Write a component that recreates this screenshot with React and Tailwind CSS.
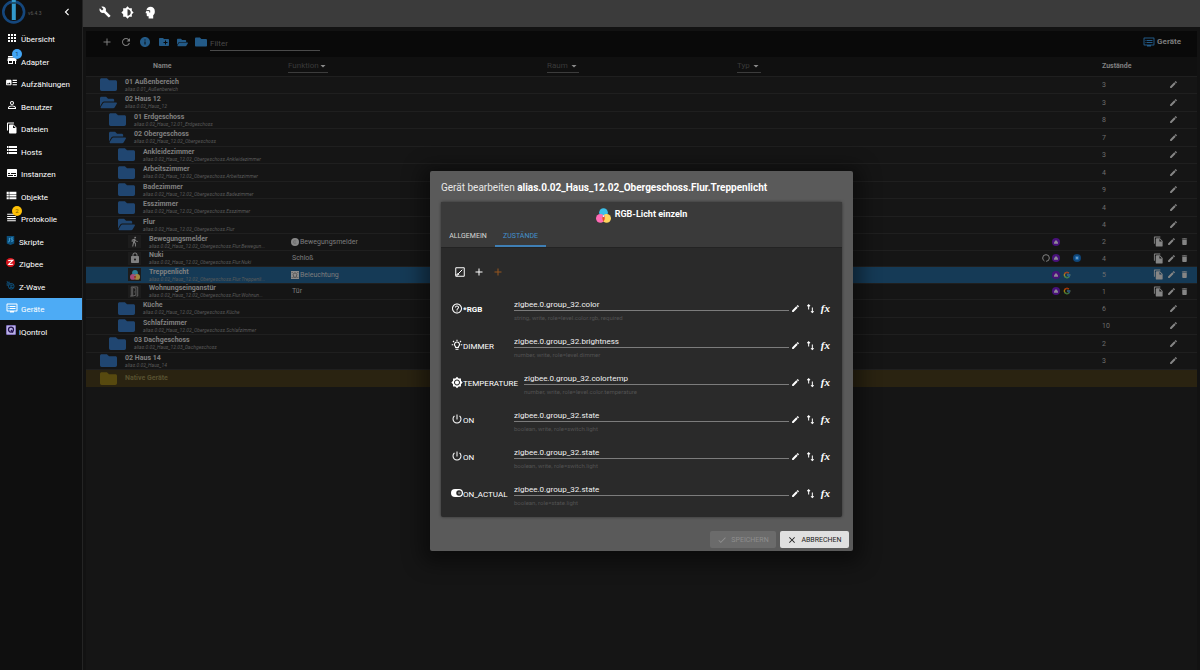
import React, { useState } from "react";
import {
    MdApps, MdStore, MdArtTrack, MdPersonOutline, MdFileCopy, MdStorage, MdSubtitles, MdViewList,
    MdViewHeadline, MdDvr, MdBuild, MdBrightness6, MdAdd, MdRefresh, MdInfo, MdCreateNewFolder,
    MdEdit, MdDelete, MdCheck, MdClose, MdHelpOutline, MdBrightness7,
    MdPowerSettingsNew, MdLock, MdDirectionsWalk, MdArrowDropDown, MdChevronLeft,
} from "react-icons/md";
import { FaFolder, FaFolderOpen } from "react-icons/fa";
import { FcGoogle } from "react-icons/fc";

const LogoIcon = () => (
    <svg viewBox="0 0 24 24" className="size-6 shrink-0">
        <circle cx="11.700" cy="12" r="10.400" fill="none" stroke="#15477d" strokeWidth="2.600" />
        <path d="M9.800 0h4v20h-4z" fill="#3399cc" />
        <path d="M9.800 2.500h4v1h-4z" fill="#0f0f0f" />
    </svg>
);

const HeadIcon = () => (
    <svg viewBox="0 0 24 24" className="size-[13px]" fill="currentColor">
        <path d="M12 1.500C8 1.500 5 4 4.600 8L3 12.500c-.2.600.2 1 .8 1H5V17c0 1.200.8 2 2 2h1.500v4H17v-6c2-1.600 3-3.600 3-7.500 0-5-3.500-8-8-8z" />
        <path d="M4 8.500h6.500v3.500" fill="none" stroke="#3b3b3b" strokeWidth="1.800" />
    </svg>
);

const RgbIcon = ({ className }) => (
    <svg viewBox="0 0 24 24" className={className}>
        <circle cx="12" cy="7.200" r="7" fill="#3dbfe8" />
        <circle cx="7" cy="16.500" r="7" fill="#ff6ab5" />
        <circle cx="17" cy="16.500" r="7" fill="#ffd45c" />
        <path d="M12 11.600a7 7 0 0 1 0 9.800a7 7 0 0 1 0-9.800z" fill="#e8442f" />
        <path d="M9.500 13.600a7 7 0 0 0 5 0L12 11z" fill="#8d62d2" />
        <circle cx="12" cy="13" r="1.300" fill="#fff" />
    </svg>
);

const BulbIcon = () => (
    <svg viewBox="0 0 24 24" className="size-3" fill="none" stroke="currentColor" strokeWidth="2.200">
        <path d="M9.300 17v-1.700a5 5 0 1 1 5.400 0V17zM9 20.500h6" />
        <path d="M12 1.500v2.500M1.500 11.500h3M19.500 11.500h3M4 4l2 2M20 4l-2 2" />
    </svg>
);

const ToggleIcon = () => (
    <svg viewBox="0 0 24 16" className="w-3 h-2 shrink-0">
        <rect width="24" height="16" rx="8" fill="currentColor" />
        <circle cx="16" cy="8" r="5.500" fill="#2a2a2a" />
        <circle cx="16.500" cy="8" r="2.500" fill="#777" />
    </svg>
);

const SwapIcon = () => (
    <svg viewBox="0 0 24 24" className="size-[11px]" fill="none" stroke="currentColor" strokeWidth="2.200">
        <path d="M8 14V4M5 7l3-3 3 3M16 10v11M13 18l3 3 3-3" />
    </svg>
);

const DoorIcon = () => (
    <svg viewBox="0 0 24 24" className="size-[11px]" fill="none" stroke="#6c6c6c" strokeWidth="1.800">
        <path d="M5 22V2h14v20h-3M2.500 22H8M8 22l7-2V5L8 3zM12.500 12v2" />
    </svg>
);

const JsIcon = () => (
    <svg viewBox="0 0 24 24" className="size-[9px]">
        <path d="M2 0h20v20l-10 4-10-4z" fill="#0b4f7c" />
        <path d="M9 5v9c0 2-3 2-4 .500M19 6c-3-2-6-1-5.500 1.500s5 1.500 5.300 4-3 3.500-5.800 1.500" fill="none" stroke="#4fb0e8" strokeWidth="2.200" />
    </svg>
);

const ZigbeeIcon = () => (
    <svg viewBox="0 0 24 24" className="size-[9px]">
        <circle cx="12" cy="12" r="12" fill="#d8141c" />
        <path d="M6 7c4-1.500 7-1 12-1L7 17c4 1 8 0 12-.5" fill="none" stroke="#fff" strokeWidth="3" />
    </svg>
);

const ZwaveIcon = () => (
    <svg viewBox="0 0 24 24" className="size-[9px]" fill="none" stroke="#0e5a8c" strokeWidth="2.400">
        <circle cx="14" cy="14" r="7.500" />
        <path d="M10 11h7l-6 6h7M1 9c2-4 5-6 9-6M3 13c1-4 3-6 7-7M6 3l-4-1" />
    </svg>
);

const IqIcon = () => (
    <svg viewBox="0 0 24 24" className="size-[10px]">
        <rect width="24" height="24" rx="3" fill="#7a68b5" />
        <rect x="2" y="2" width="20" height="20" fill="#b9b2e4" />
        <circle cx="12" cy="11" r="6" fill="none" stroke="#23104f" strokeWidth="3" />
        <path d="M12 12l5 6" stroke="#23104f" strokeWidth="3" />
    </svg>
);

const ShowAllIcon = () => (
    <svg viewBox="0 0 24 24" className="size-3" fill="none" stroke="currentColor" strokeWidth="2">
        <path d="M3.500 3.500h17v17h-17z" />
        <path d="M7.500 16.500l9-9M7 17.300l1-3 2 2zM3 16l4 4" />
    </svg>
);

const AliasIcon = () => (
    <svg viewBox="0 0 24 24" className="size-2">
        <circle cx="12" cy="12" r="12" fill="#48117a" />
        <path d="M6 13l6-7 6 7v4H6z" fill="#8f8a96" />
    </svg>
);

const AlexaIcon = () => (
    <svg viewBox="0 0 24 24" className="size-2">
        <circle cx="12" cy="12" r="10" fill="none" stroke="#808080" strokeWidth="3" strokeDasharray="58 5" strokeDashoffset="-20" />
    </svg>
);

const MaterialIcon = () => (
    <svg viewBox="0 0 24 24" className="size-2">
        <circle cx="12" cy="12" r="12" fill="#0f4577" />
        <circle cx="12" cy="12" r="7" fill="#1c65a6" />
        <circle cx="12" cy="12" r="3.500" fill="#6d9cc4" />
    </svg>
);

const MotionIcon = () => (
    <svg viewBox="0 0 24 24" className="size-2">
        <circle cx="12" cy="12" r="12" fill="#888" />
        <path d="M16 8a5.500 5.500 0 1 0 0 8M12 9v6" fill="none" stroke="#666" strokeWidth="2" />
    </svg>
);

const LampIcon = () => (
    <svg viewBox="0 0 24 24" className="size-2">
        <rect width="24" height="24" fill="#8b8b8b" />
        <path d="M8 15a5.500 5.500 0 1 1 8 0v4H8zM2 3l3 3M22 3l-3 3M2 21l3-3M22 21l-3-3" fill="none" stroke="#333" strokeWidth="1.800" />
    </svg>
);

const menu = [
    { name: "Übersicht", icon: <MdApps size={12} /> },
    { name: "Adapter", icon: <MdStore size={12} />, badge: "1", badgeClass: "bg-[#42a5f5] text-[#14405f]" },
    { name: "Aufzählungen", icon: <MdArtTrack size={13} /> },
    { name: "Benutzer", icon: <MdPersonOutline size={12} /> },
    { name: "Dateien", icon: <MdFileCopy size={12} /> },
    { name: "Hosts", icon: <MdStorage size={12} /> },
    { name: "Instanzen", icon: <MdSubtitles size={12} /> },
    { name: "Objekte", icon: <MdViewList size={13} /> },
    { name: "Protokolle", icon: <MdViewHeadline size={13} />, badge: "2", badgeClass: "bg-[#ffc107] text-[#7a5a00]" },
    { name: "Skripte", icon: <JsIcon />, custom: true },
    { name: "Zigbee", icon: <ZigbeeIcon />, custom: true },
    { name: "Z-Wave", icon: <ZwaveIcon />, custom: true },
    { name: "Geräte", icon: <MdDvr size={12} /> },
    { name: "iQontrol", icon: <IqIcon />, custom: true },
];

const OG = "alias.0.02_Haus_12.02_Obergeschoss";

const rows = [
    { name: "01 Außenbereich", id: "alias.0.01_Außenbereich", level: 0, count: 3 },
    { name: "02 Haus 12", id: "alias.0.02_Haus_12", level: 0, count: 3, open: true },
    { name: "01 Erdgeschoss", id: "alias.0.02_Haus_12.01_Erdgeschoss", level: 1, count: 8 },
    { name: "02 Obergeschoss", id: OG, level: 1, count: 7, open: true },
    { name: "Ankleidezimmer", id: `${OG}.Ankleidezimmer`, level: 2, count: 3 },
    { name: "Arbeitszimmer", id: `${OG}.Arbeitszimmer`, level: 2, count: 4 },
    { name: "Badezimmer", id: `${OG}.Badezimmer`, level: 2, count: 9 },
    { name: "Esszimmer", id: `${OG}.Esszimmer`, level: 2, count: 4 },
    { name: "Flur", id: `${OG}.Flur`, level: 2, count: 4, open: true },
    { name: "Bewegungsmelder", id: `${OG}.Flur.Bewegun...`, device: <MdDirectionsWalk size={11} />, func: "Bewegungsmelder", funcIcon: <MotionIcon />, count: 2, links: ["", "alias", "", ""] },
    { name: "Nuki", id: `${OG}.Flur.Nuki`, device: <MdLock size={12} />, func: "Schloß", count: 4, links: ["alexa", "alias", "", "material"] },
    { name: "Treppenlicht", id: `${OG}.Flur.Treppenli...`, device: <RgbIcon className="size-[10px] opacity-60" />, func: "Beleuchtung", funcIcon: <LampIcon />, count: 5, links: ["", "alias", "google", ""], selected: true },
    { name: "Wohnungseinganstür", id: `${OG}.Flur.Wohnun...`, device: <DoorIcon />, func: "Tür", count: 1, links: ["", "alias", "google", ""] },
    { name: "Küche", id: `${OG}.Küche`, level: 2, count: 6 },
    { name: "Schlafzimmer", id: `${OG}.Schlafzimmer`, level: 2, count: 10 },
    { name: "03 Dachgeschoss", id: "alias.0.02_Haus_12.03_Dachgeschoss", level: 1, count: 2 },
    { name: "02 Haus 14", id: "alias.0.02_Haus_14", level: 0, count: 3 },
    { name: "Native Geräte", level: 0, native: true },
];

const states = [
    { name: "*RGB", icon: <MdHelpOutline size={13} />, value: "zigbee.0.group_32.color", info: "string, write, role=level.color.rgb, required", required: true },
    { name: "DIMMER", icon: <BulbIcon />, value: "zigbee.0.group_32.brightness", info: "number, write, role=level.dimmer" },
    { name: "TEMPERATURE", icon: <MdBrightness7 size={13} />, value: "zigbee.0.group_32.colortemp", info: "number, write, role=level.color.temperature" },
    { name: "ON", icon: <MdPowerSettingsNew size={14} />, value: "zigbee.0.group_32.state", info: "boolean, write, role=switch.light" },
    { name: "ON", icon: <MdPowerSettingsNew size={14} />, value: "zigbee.0.group_32.state", info: "boolean, write, role=switch.light" },
    { name: "ON_ACTUAL", icon: <ToggleIcon />, value: "zigbee.0.group_32.state", info: "boolean, role=state.light" },
];

const linkIcons = {
    alexa: <AlexaIcon />,
    alias: <AliasIcon />,
    google: <FcGoogle size={8} className="opacity-60" />,
    material: <MaterialIcon />,
};

const indent = ["pl-[14px]", "pl-[23px]", "pl-8"];

const Sidebar = () => (
    <aside className="w-[83px] shrink-0 bg-[#0f0f0f] border-r border-[#242424]">
        <div className="h-7 flex items-start pl-[2px]">
            <LogoIcon />
            <span className="ml-[2px] mt-[10px] text-[5px] leading-[6px] text-[#5c5c5c]">v6.4.3</span>
            <button aria-label="Menü schließen" className="ml-auto mr-2 mt-[5px] text-white">
                <MdChevronLeft size={14} />
            </button>
        </div>
        <nav>
            <ul>
                {menu.map((item) => (
                    <li key={item.name} className="odd:h-[22px] even:h-[23px]">
                        <a
                            href="#"
                            className={`h-full flex items-center pl-[5px] text-[8px] leading-[10px] text-white ${item.name === "Geräte" ? "bg-[#4dabf5]" : ""}`}
                        >
                            <span className={`relative flex items-center justify-center pb-[3px] mr-[3px] ${item.custom ? "w-[11px]" : "w-[13px]"}`}>
                                {item.icon}
                                {item.badge && (
                                    <span className={`absolute -top-[5px] left-[7px] size-[10px] rounded-full text-[6px] leading-[10px] text-center ${item.badgeClass}`}>
                                        {item.badge}
                                    </span>
                                )}
                            </span>
                            <span className="pt-[2px]">{item.name}</span>
                        </a>
                    </li>
                ))}
            </ul>
        </nav>
    </aside>
);

const Toolbar = () => (
    <div className="h-[26px] bg-[#090909] flex items-center pl-[15px] pr-4 pb-1 text-[#7d7d7d]">
        <div className="flex items-center gap-[7px]">
            <button aria-label="Hinzufügen"><MdAdd size={12} /></button>
            <button aria-label="Aktualisieren"><MdRefresh size={12} /></button>
            <button aria-label="Info" className="text-[#235a87]"><MdInfo size={12} /></button>
            <button aria-label="Neuer Ordner" className="text-[#235a87]"><MdCreateNewFolder size={12} /></button>
            <button aria-label="Alle öffnen" className="text-[#235a87]"><FaFolderOpen size={11} /></button>
            <button aria-label="Alle schließen" className="text-[#235a87]"><FaFolder size={12} /></button>
        </div>
        <input
            aria-label="Filter"
            placeholder="Filter"
            className="ml-[3px] mt-[3px] w-[110px] h-[14px] border-b border-[#4a4a4a] bg-transparent text-[8px] placeholder:text-[#484848] outline-none"
        />
        <div className="ml-auto flex items-center gap-[2px] text-[8px] font-bold">
            <MdDvr size={12} className="text-[#235a87]" />
            <span>Geräte</span>
        </div>
    </div>
);

const HeadSelect = ({ label, className }) => (
    <div className={`relative ${className}`}>
        <select aria-label={label} className="block w-full h-[14px] pt-px appearance-none bg-transparent border-b border-[#3c3c3c] text-[8px] font-normal text-[#3a3a3a]">
            <option>{label}</option>
        </select>
        <MdArrowDropDown size={12} className="absolute -right-px top-px pointer-events-none text-[#8a8a8a]" />
    </div>
);

const DeviceRow = ({ row }) => {
    const Folder = row.open ? FaFolderOpen : FaFolder;
    let background = "";
    if (row.selected) background = "bg-[#153a56]";
    if (row.native) background = "bg-[#2a2311]";

    return (
        <tr className={`border-t border-[#1f1f1f] ${row.device ? "odd:h-4 even:h-[17px]" : "odd:h-[17px] even:h-[18px]"} ${background}`}>
            <td className="p-0">
                {row.device ? (
                    <div className="flex items-center pl-[42px]">
                        <span className="size-[13px] shrink-0 flex items-center justify-center bg-[#1c1c1c] text-[#808080]">{row.device}</span>
                        <div className="ml-2 whitespace-nowrap">
                            <div className="text-[7px] leading-[8px] font-bold text-[#808080]">{row.name}</div>
                            <div className="text-[5px] leading-[6px] italic text-[#5a5a5a]">{row.id}</div>
                        </div>
                    </div>
                ) : (
                    <div className={`flex items-center ${indent[row.level]}`}>
                        <Folder size={17} className={`shrink-0 -my-[2px] ${row.native ? "text-[#57490f]" : "text-[#204671]"}`} />
                        <div className="ml-2 whitespace-nowrap">
                            <div className={`text-[7px] leading-[8px] font-bold ${row.native ? "text-[#57502f]" : "text-[#808080]"}`}>{row.name}</div>
                            {row.id && <div className="text-[5px] leading-[6px] italic text-[#5a5a5a]">{row.id}</div>}
                        </div>
                    </div>
                )}
            </td>
            <td className="p-0">
                {row.func && (
                    <div className={`flex items-center gap-px text-[7px] leading-[8px] text-[#7d7d7d] ${row.funcIcon ? "pl-[5px]" : "pl-[6px]"}`}>
                        {row.funcIcon}
                        <span>{row.func}</span>
                    </div>
                )}
            </td>
            <td className="p-0"></td>
            <td className="p-0"></td>
            <td className="p-0">
                {row.links && (
                    <div className="grid grid-cols-4 w-[41px]">
                        {row.links.map((link, i) => <span key={i}>{linkIcons[link]}</span>)}
                    </div>
                )}
            </td>
            <td className="p-0 pt-px text-[7px] leading-[8px] text-[#6e6e6e]">{row.count}</td>
            <td className="p-0">
                {row.device && (
                    <div className="flex items-center text-[#858585]">
                        <button aria-label="Kopieren"><MdFileCopy size={11} /></button>
                        <button aria-label="Bearbeiten" className="ml-[3px]"><MdEdit size={9} /></button>
                        <button aria-label="Löschen" className="ml-1"><MdDelete size={9} /></button>
                    </div>
                )}
                {!row.device && !row.native && (
                    <button aria-label="Bearbeiten" className="block ml-4 text-[#858585]"><MdEdit size={9} /></button>
                )}
            </td>
        </tr>
    );
};

const DeviceTable = () => (
    <table className="w-full table-fixed border-collapse">
        <thead>
            <tr className="h-[19px] bg-[#101010] text-[7px] leading-[8px] text-[#808080] text-left">
                <th className="w-[18%] p-0 pl-[67px]">Name</th>
                <th className="w-[23.5%] p-0"><HeadSelect label="Funktion" className="ml-[2px] w-10" /></th>
                <th className="w-[17%] p-0"><HeadSelect label="Raum" className="w-8" /></th>
                <th className="p-0"><HeadSelect label="Typ" className="ml-px w-6" /></th>
                <th className="w-[60px] p-0"></th>
                <th className="w-[51px] p-0">Zustände</th>
                <th className="w-11 p-0"></th>
            </tr>
        </thead>
        <tbody>
            {rows.map((row) => <DeviceRow key={row.name} row={row} />)}
        </tbody>
    </table>
);

const StateRow = ({ state, index }) => {
    const [value, setValue] = useState(state.value);

    return (
        <div className="h-[37px] flex items-start">
            <div className="min-w-[63px] h-[26px] shrink-0 flex items-center pr-[6px]">
                <span className="w-3 flex justify-center">{state.icon}</span>
                <label htmlFor={`state-${index}`} className={`pt-[2px] text-[8px] leading-[9px] ${state.required ? "font-bold" : ""}`}>
                    {state.name}
                </label>
            </div>
            <div className="flex-1 min-w-0">
                <input
                    id={`state-${index}`}
                    value={value}
                    onChange={(e) => setValue(e.target.value)}
                    className="block w-full h-4 pt-[3px] border-b border-[#7c7c7c] bg-transparent text-[8px] text-[#f0f0f0] outline-none"
                />
                <p className="mt-[3px] text-[6px] leading-[7px] text-[#525252]">{state.info}</p>
            </div>
            <div className="h-[27px] flex items-center gap-[5px] pl-[2px]">
                <button aria-label="Bearbeiten"><MdEdit size={9} /></button>
                <button aria-label="Lesen/Schreiben"><SwapIcon /></button>
                <button aria-label="Funktion" className="pb-px font-['Liberation_Serif',serif] text-[11px] leading-3 font-bold italic">fx</button>
            </div>
        </div>
    );
};

const EditDialog = () => (
    <div role="dialog" aria-labelledby="dialog-title" className="w-[423px] bg-[#5a5a5a] rounded-[2px] shadow-[0_4px_20px_8px_rgba(0,0,0,0.45)] text-white">
        <h2 id="dialog-title" className="pt-[11px] px-[11px] text-[10px] leading-[11px] text-[#e8e8e8]">
            Gerät bearbeiten <b className="text-white">alias.0.02_Haus_12.02_Obergeschoss.Flur.Treppenlicht</b>
        </h2>
        <div className="mt-[9px] mx-[11px] bg-[#2a2a2a] rounded-[2px] shadow-[0_0_3px_rgba(0,0,0,0.5)]">
            <div className="bg-[#3a3a3a] border-b border-[#232323]">
                <div className="h-[25px] pt-px flex items-center justify-center gap-1 text-[9px] font-bold">
                    <RgbIcon className="size-[15px]" />
                    <span>RGB-Licht einzeln</span>
                </div>
                <div role="tablist" className="flex h-5 text-[7px]">
                    <button role="tab" aria-selected="false" className="w-[54px] border-b-2 border-transparent text-[#d8d8d8]">ALLGEMEIN</button>
                    <button role="tab" aria-selected="true" className="w-[51px] border-b-2 border-[#3f7fb5] text-[#4492cf]">ZUSTÄNDE</button>
                </div>
            </div>
            <div className="pt-[18px] pl-[10px] pr-3">
                <div className="flex items-center gap-[7px] pl-[3px]">
                    <button aria-label="Alle anzeigen"><ShowAllIcon /></button>
                    <button aria-label="Zustand hinzufügen"><MdAdd size={12} /></button>
                    <button aria-label="Eigenen Zustand hinzufügen" className="text-[#96561f]"><MdAdd size={12} /></button>
                </div>
                <div className="mt-[17px]">
                    {states.map((state, i) => <StateRow key={i} state={state} index={i} />)}
                </div>
            </div>
        </div>
        <div className="flex justify-end gap-1 pt-[14px] pr-1 pb-[3px] text-[7px]">
            <button disabled className="h-[17px] w-[66px] flex items-center justify-center gap-1 rounded-[2px] bg-[#6b6b6b] text-[#8e8e8e]">
                <MdCheck size={10} /> <span className="pt-px">SPEICHERN</span>
            </button>
            <button className="h-[17px] w-[69px] flex items-center justify-center gap-1 rounded-[2px] bg-[#e0e0e0] text-[#1c1c1c]">
                <MdClose size={10} /> <span className="pt-px">ABBRECHEN</span>
            </button>
        </div>
    </div>
);

const App = () => {
    return (
        <div className="min-h-screen flex bg-[#121212] font-[Roboto,'Liberation_Sans',sans-serif]">
            <Sidebar />
            <div className="flex-1 min-w-0 flex flex-col">
                <header className="h-[27px] bg-[#3b3b3b] flex items-center gap-[10px] pl-4 pb-[3px] text-white">
                    <button aria-label="Einstellungen"><MdBuild size={12} /></button>
                    <button aria-label="Theme wechseln"><MdBrightness6 size={13} /></button>
                    <button aria-label="Expertenmodus"><HeadIcon /></button>
                </header>
                <main className="relative flex-1 px-[3px] pt-1">
                    <div className="h-full bg-[#151515]">
                        <Toolbar />
                        <DeviceTable />
                    </div>
                    <div className="absolute inset-0 flex items-center justify-center pt-[25px]">
                        <EditDialog />
                    </div>
                </main>
            </div>
        </div>
    );
};

export default App;
